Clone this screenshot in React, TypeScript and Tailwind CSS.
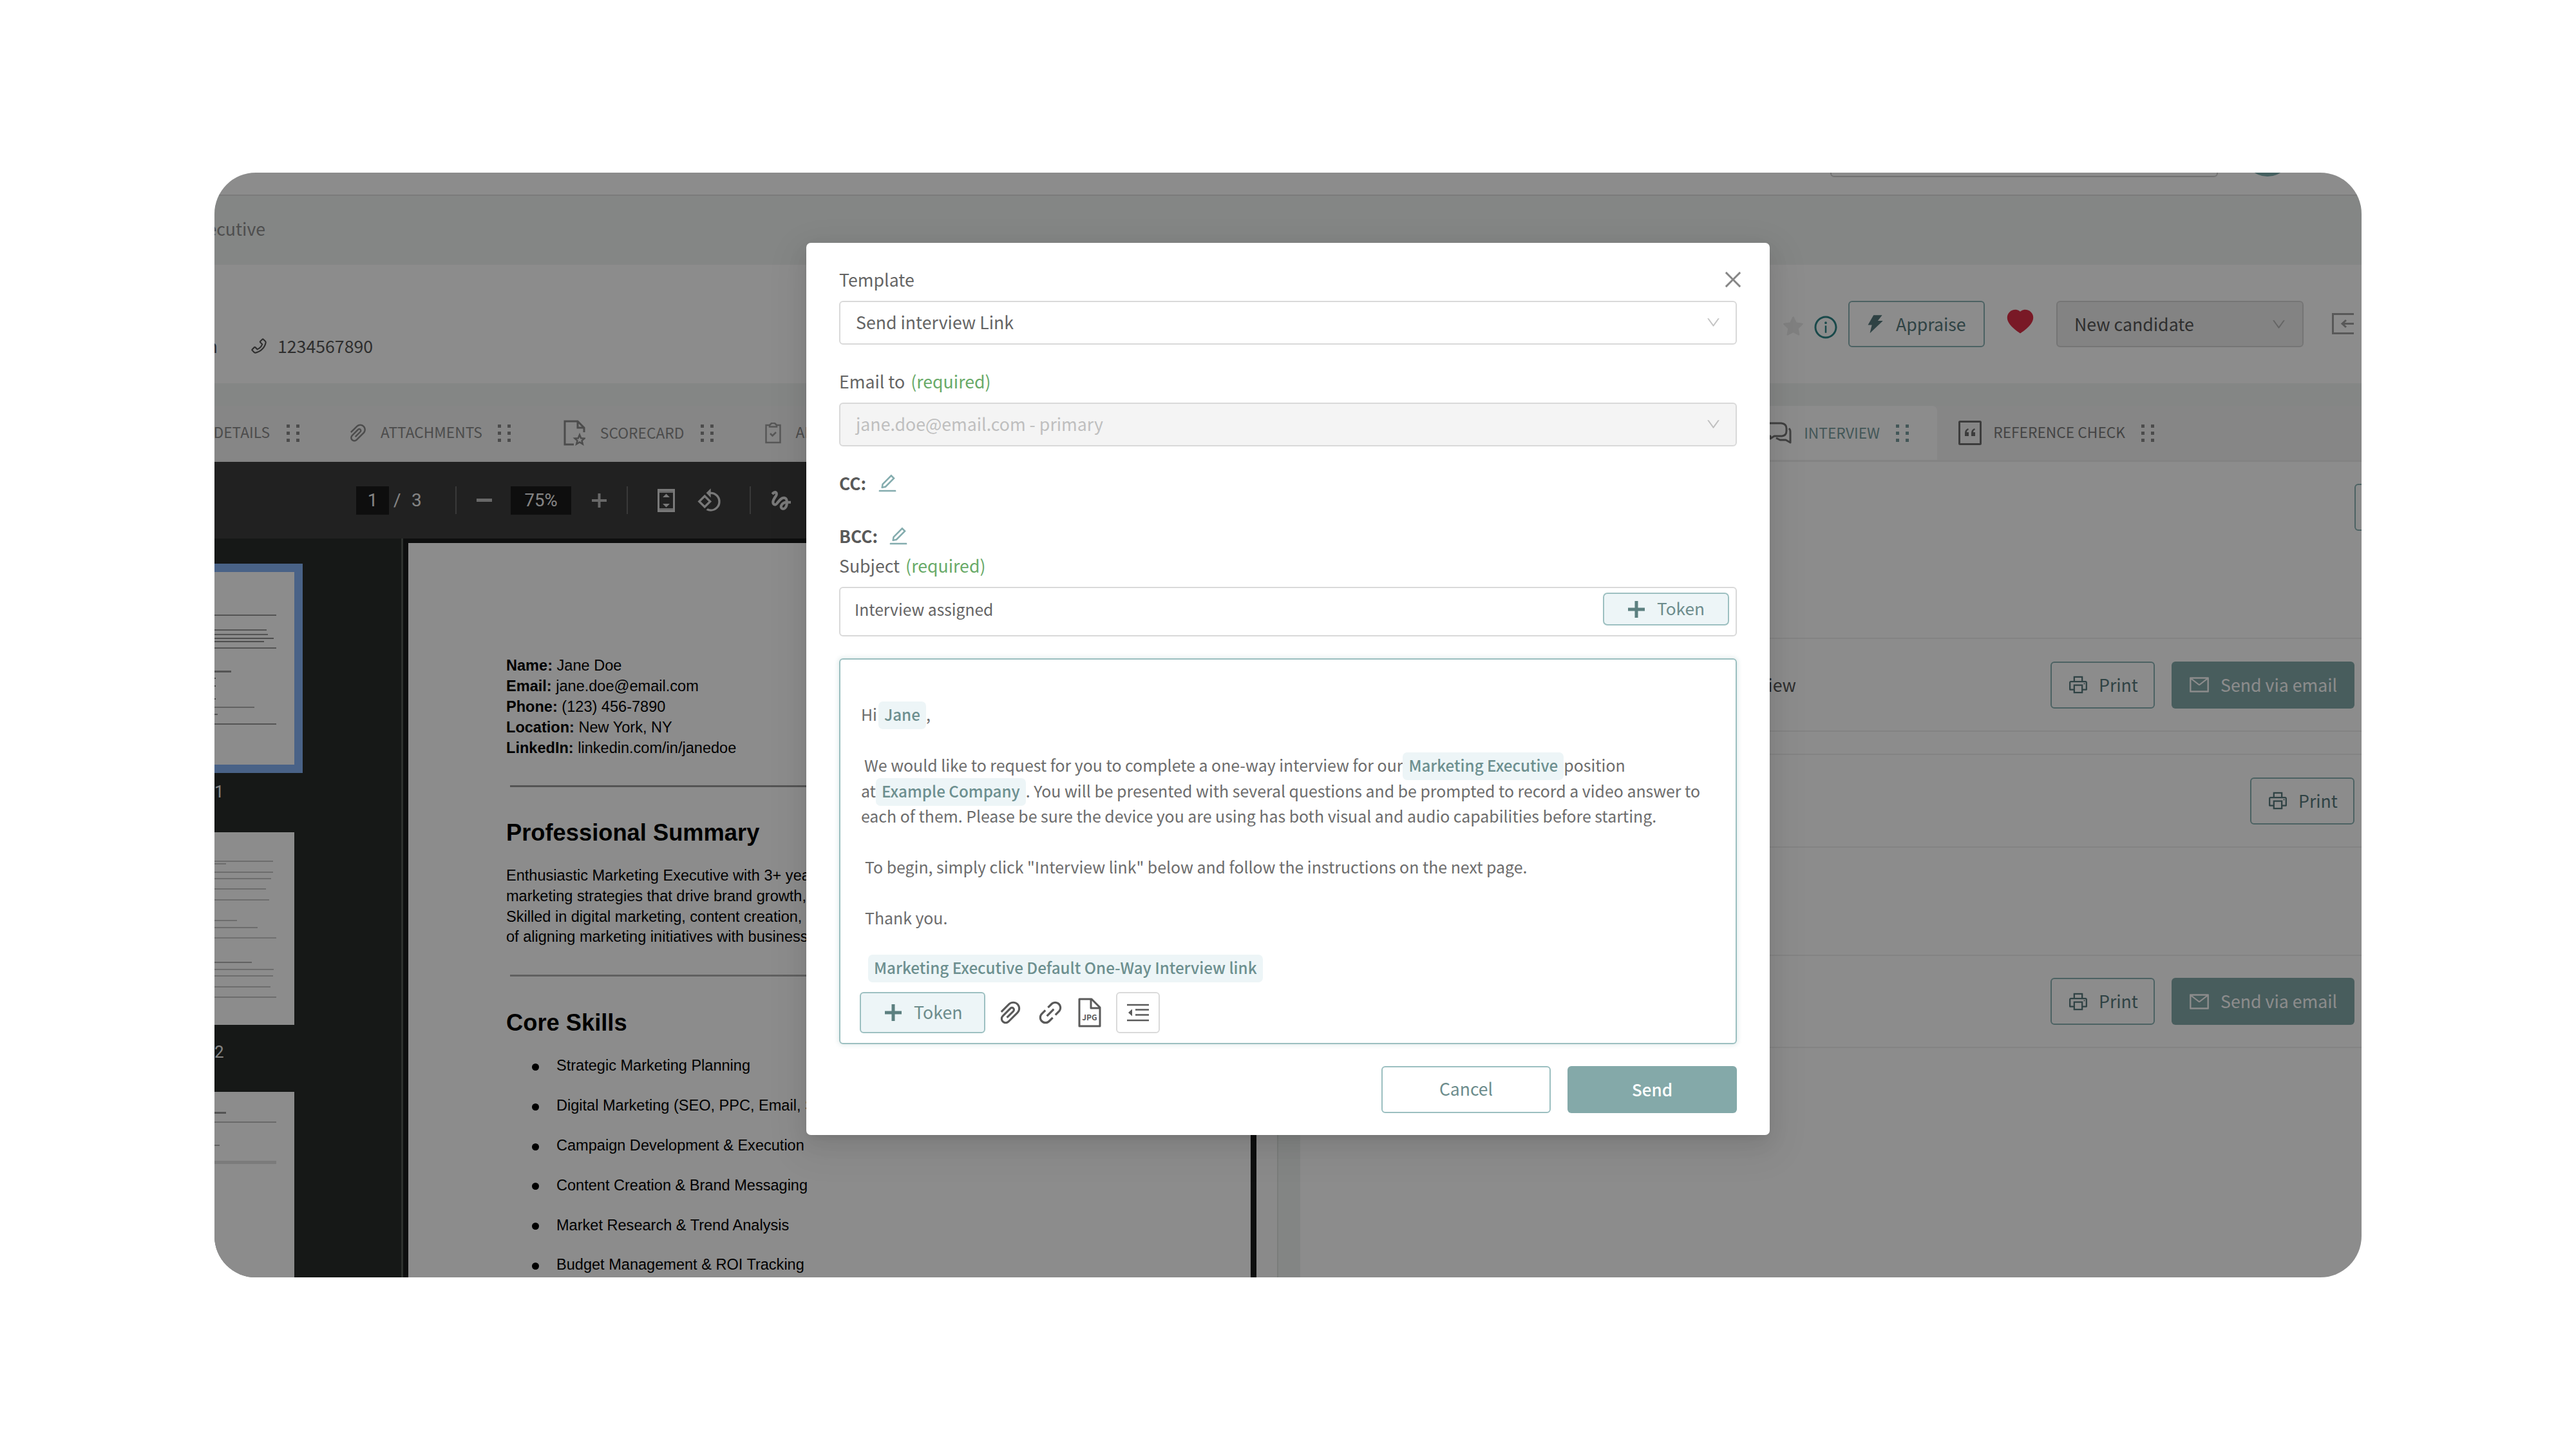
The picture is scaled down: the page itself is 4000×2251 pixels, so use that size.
import type { ReactNode } from "react";
import {
  AiFillHeart,
  AiFillStar,
  AiFillThunderbolt,
  AiOutlineClose,
  AiOutlineDown,
  AiOutlineEdit,
  AiOutlineInfoCircle,
  AiOutlineLink,
  AiOutlineMail,
  AiOutlinePaperClip,
  AiOutlinePhone,
  AiOutlinePrinter,
} from "react-icons/ai";
import { MdGesture, MdOutlineRotate90DegreesCcw } from "react-icons/md";

const skills = [
  "Strategic Marketing Planning",
  "Digital Marketing (SEO, PPC, Email, Social Media)",
  "Campaign Development & Execution",
  "Content Creation & Brand Messaging",
  "Market Research & Trend Analysis",
  "Budget Management & ROI Tracking",
];

const contact = [
  ["Name:", "Jane Doe"],
  ["Email:", "jane.doe@email.com"],
  ["Phone:", "(123) 456-7890"],
  ["Location:", "New York, NY"],
  ["LinkedIn:", "linkedin.com/in/janedoe"],
];

// [y, length, thickness, opacity]
type Stroke = [number, number, number, number];

const thumbOne: Stroke[] = [
  [66, 96, 2, 0.4],
  [89, 81, 2, 0.4],
  [96, 83, 2, 0.4],
  [102, 92, 2, 0.45],
  [107, 77, 2, 0.45],
  [117, 96, 2, 0.4],
  [153, 26, 3, 0.4],
  [164, 2, 2, 0.5],
  [176, 2, 2, 0.5],
  [196, 2, 2, 0.5],
  [209, 62, 2, 0.3],
  [220, 5, 2, 0.4],
  [235, 96, 2, 0.4],
];

const thumbTwo: Stroke[] = [
  [44, 91, 2, 0.22],
  [48, 18, 2, 0.22],
  [61, 91, 2, 0.22],
  [71, 88, 2, 0.22],
  [87, 80, 2, 0.22],
  [104, 85, 2, 0.22],
  [136, 35, 2, 0.22],
  [147, 67, 2, 0.22],
  [163, 96, 2, 0.2],
  [201, 58, 2, 0.3],
  [212, 92, 2, 0.22],
  [222, 91, 2, 0.22],
  [239, 87, 2, 0.22],
  [255, 96, 2, 0.22],
];

const thumbThree: Stroke[] = [
  [31, 18, 3, 0.4],
  [46, 96, 2, 0.25],
  [82, 8, 2, 0.3],
  [107, 96, 5, 0.12],
];

function PageThumb({ strokes }: { strokes: Stroke[] }) {
  return (
    <svg width="124" height="299" viewBox="0 0 124 299" className="block shrink-0 bg-white">
      {strokes.map(([y, length, thickness, opacity]) => (
        <rect key={y} x="0" y={y} width={length} height={thickness} fill="#000" opacity={opacity} />
      ))}
    </svg>
  );
}

function Dots({ className = "" }: { className?: string }) {
  return (
    <svg width="20" height="27" viewBox="0 0 20 27" className={className} fill="currentColor">
      <path d="M0 0h5v5H0zM15 0h5v5h-5zM0 11h5v5H0zM15 11h5v5h-5zM0 22h5v5H0zM15 22h5v5h-5z" />
    </svg>
  );
}

function Label({ children, required }: { children: ReactNode; required?: boolean }) {
  return (
    <>
      {children}
      {required && <span className="ml-[9px] text-[#68aa68]">(required)</span>}
    </>
  );
}

function Token({ children }: { children: ReactNode }) {
  return (
    <span className="rounded-[7px] bg-[#edf5f7] px-[9px] pt-[2px] pb-[6px] text-[24.200px] font-medium text-[#6c8f8f]">
      {children}
    </span>
  );
}

function Plus() {
  return (
    <svg width="26" height="26" viewBox="0 0 26 26" fill="#5c8080">
      <path d="M10.500 0h5v10.500H26v5H15.500V26h-5V15.500H0v-5h10.500z" />
    </svg>
  );
}

function PrintButton() {
  return (
    <button className="flex h-[73px] w-[162px] items-center rounded-[6px] border-2 border-[#8ab3b4] pl-[24px] text-[#56797c]">
      <AiOutlinePrinter size={34} />
      <span className="ml-[15px]">Print</span>
    </button>
  );
}

function SendEmailButton() {
  return (
    <button className="ml-[26px] flex h-[73px] w-[284px] items-center rounded-[6px] bg-[#84a9a9] pl-[26px] text-white">
      <AiOutlineMail size={34} />
      <span className="ml-[16px]">Send via email</span>
    </button>
  );
}

function TopBar() {
  return (
    <>
      <div className="flex h-9 shrink-0 items-start justify-end border-b-2 border-[#e0e0e0]">
        <div className="-mt-[33px] h-10 w-[602px] rounded-[6px] border-2 border-[#d0d0d0]"></div>
        <div className="-mt-[68px] mr-[109px] ml-[40px] size-[74px] rounded-full bg-[#7fb0b0]"></div>
      </div>

      <div className="flex h-[107px] shrink-0 items-center bg-[#f0f4f2] pb-[5px] text-[#8f8f8f]">
        <div className="flex w-[79px] justify-end whitespace-nowrap">Executive</div>
      </div>

      <div className="flex h-[184px] shrink-0 items-center pr-[12px]">
        <div className="mt-[68px] flex items-center text-[#555]">
          <div className="flex w-[5px] justify-end">m</div>
          <AiOutlinePhone size={30} className="ml-[49px]" />
          <span className="ml-[14px]">1234567890</span>
        </div>
        <div className="ml-auto flex items-center">
          <AiFillStar size={37} className="mt-[8px] text-[#e9e9e9]" />
          <AiOutlineInfoCircle size={40} className="mt-[9px] ml-[12px] text-[#2f8587]" />
          <button className="ml-[15px] flex h-[72px] w-[212px] items-center rounded-[6px] border-2 border-[#8ab3b4] pl-[23px] text-[#56797c]">
            <AiFillThunderbolt size={34} />
            <span className="ml-[15px]">Appraise</span>
          </button>
          <AiFillHeart size={48} className="-mt-[8px] ml-[31px] text-[#dc2f45]" />
          <div className="ml-[32px] flex h-[72px] w-[384px] items-center justify-between rounded-[6px] border-2 border-[#d6d6d6] bg-[#efefef] pr-[24px] pl-[26px] text-[#555]">
            New candidate
            <AiOutlineDown size={25} className="text-[#b8b8b8]" />
          </div>
          <svg width="34" height="34" viewBox="0 0 34 34" fill="none" stroke="#a0a0a0" strokeWidth="3" className="ml-[44px]">
            <path d="M34 1.500H1.500v30H34" />
            <path d="M34 16.500H16M22 11l-6 5.500 6 5.500" />
          </svg>
        </div>
      </div>
    </>
  );
}

function Tabs() {
  return (
    <>
      <div className="h-[35px] shrink-0 bg-[#f0f4f2]"></div>
      <div className="flex h-[87px] shrink-0 items-center border-b-3 border-[#eeeeee] bg-[#f4f4f4] text-[22.750px] text-[#8a8a8a]">
        <div className="flex w-[86px] justify-end pb-[2px]">DETAILS</div>
        <Dots className="ml-[26px]" />
        <AiOutlinePaperClip size={36} className="ml-[73px]" />
        <span className="ml-[17px] pb-[2px]">ATTACHMENTS</span>
        <Dots className="ml-[24px]" />
        <svg width="34" height="40" viewBox="0 0 34 40" fill="none" stroke="currentColor" strokeWidth="3" className="ml-[82px]">
          <path d="M16 38H2V2h20l10 10v7M22 2v10h10" />
          <path d="M25 23l2.200 5.200 5.300.4-4 3.500 1.300 5.300-4.800-2.900-4.800 2.900 1.300-5.300-4-3.500 5.300-.4z" strokeWidth="2.500" />
        </svg>
        <span className="ml-[23px]">SCORECARD</span>
        <Dots className="ml-[26px]" />
        <svg width="25" height="33" viewBox="0 0 25 33" fill="none" stroke="#9e9e9e" strokeWidth="2.500" className="ml-[80px]">
          <path d="M7 4H1.500v27h22V4H18" />
          <path d="M7 6.500V4l3-3h5l3 3v2.500zM8 17l3.500 3.500 5.500-5.500" />
        </svg>
        <span className="ml-[22px] pb-[2px]">APPRAISALS</span>

        <div className="ml-auto flex h-full w-[308px] items-center rounded-tr-[8px] bg-white pl-[46px] text-[#7a9ea0]">
          <svg width="36" height="36" viewBox="0 0 36 36" fill="none" stroke="#767676" strokeWidth="3" strokeLinejoin="round">
            <path d="M2 3h18q8 1 8 8v4q0 7-7 8H9l-6 4v-4H1" />
            <path d="M32 11q2 2 2 5v17l-7-4H18l-6-3" />
          </svg>
          <span className="ml-[19px]">INTERVIEW</span>
          <Dots className="ml-[25px]" />
        </div>
        <svg width="36" height="38" viewBox="0 0 36 38" fill="none" stroke="#6e6e6e" strokeWidth="3" className="ml-[33px]">
          <rect x="1.500" y="1.500" width="33" height="35" rx="1" />
          <path
            d="M15 12q-5 2-5 7v5h6v-6h-3q0-3 3-4zM25 12q-5 2-5 7v5h6v-6h-3q0-3 3-4z"
            fill="#6e6e6e"
            stroke="none"
          />
        </svg>
        <span className="ml-[18px] pb-[2px] text-[#7c7c7c]">REFERENCE CHECK</span>
        <Dots className="mr-[322px] ml-[25px]" />
      </div>
    </>
  );
}

function PdfViewer() {
  return (
    <div className="flex w-[1650px] shrink-0 flex-col">
      <div className="flex h-[119px] shrink-0 items-center bg-[#3c3c3c] pl-[220px] font-['Roboto',sans-serif] text-[28px] text-[#f1f1f1]">
        <div className="flex h-[44px] w-[51px] items-center justify-center bg-[#1b1b1b]">1</div>
        <span className="ml-[7px] w-[11px]">/</span>
        <span className="ml-[17px] w-[21px]">3</span>
        <div className="ml-[47px] h-[43px] w-[2px] bg-[#686868]"></div>
        <div className="ml-[31px] h-[5px] w-[24px] bg-[#bdbdbd]"></div>
        <div className="ml-[29px] flex h-[44px] w-[94px] items-center justify-center bg-[#1b1b1b] text-[27.500px]">75%</div>
        <svg width="23" height="22" viewBox="0 0 23 22" fill="#bdbdbd" className="ml-[32px]">
          <path d="M9.500 0h4v9H23v4h-9.500v9h-4v-9H0V9h9.500z" />
        </svg>
        <div className="ml-[31px] h-[43px] w-[2px] bg-[#686868]"></div>
        <svg width="27" height="36" viewBox="0 0 27 36" fill="none" className="ml-[46px]">
          <rect x="1.500" y="1.500" width="24" height="33" stroke="#dcdcdc" strokeWidth="3" />
          <path d="M3 4.500h21M3 31.500h21" stroke="#c2c2c2" strokeWidth="3" />
          <path d="M8 13h11l-5.500-5.500zM8 23h11l-5.500 5.500z" fill="#dcdcdc" />
        </svg>
        <MdOutlineRotate90DegreesCcw size={40} className="ml-[34px] text-[#dcdcdc]" />
        <div className="ml-[42px] h-[43px] w-[2px] bg-[#686868]"></div>
        <MdGesture size={40} className="ml-[27px] text-[#dcdcdc]" />
      </div>

      <div className="flex min-h-0 grow">
        <div className="flex w-[290px] shrink-0 flex-col overflow-hidden bg-[#282c2a] pt-[39px] font-['Roboto',sans-serif] text-[26px] text-[#f1f1f1]">
          <div className="h-[325px] w-[137px] shrink-0 bg-[#86b3f6] pt-[13px]">
            <PageThumb strokes={thumbOne} />
          </div>
          <div className="flex h-[92px] shrink-0 items-center pb-[34px]">1</div>
          <PageThumb strokes={thumbTwo} />
          <div className="flex h-[104px] shrink-0 items-center pb-[20px]">2</div>
          <PageThumb strokes={thumbThree} />
        </div>
        <div className="w-[3px] shrink-0 bg-[#555955]"></div>
        <div className="flex grow bg-[#1b1d1c] pt-[7px] pl-[8px]">
          <div className="w-[1308px] shrink-0 bg-white px-[152px] pt-[175px] font-['Liberation_Sans',sans-serif] text-[23.550px] whitespace-nowrap text-black">
            {contact.map(([name, value]) => (
              <div key={name} className="h-[31.900px] leading-[31.900px]">
                <b>{name}</b> {value}
              </div>
            ))}
            <div className="mt-[42px] ml-[6px] h-[3px] bg-[#9a9a9a]"></div>
            <h2 className="mt-[50px] text-[36.300px] leading-[42px] font-bold">Professional Summary</h2>
            <div className="mt-[30px] leading-[31.600px]">
              <p>Enthusiastic Marketing Executive with 3+ years</p>
              <p>marketing strategies that drive brand growth,</p>
              <p>Skilled in digital marketing, content creation,</p>
              <p>of aligning marketing initiatives with business</p>
            </div>
            <div className="mt-[42px] ml-[6px] h-[3px] bg-[#b0b0b0]"></div>
            <h2 className="mt-[51px] text-[36.300px] leading-[42px] font-bold">Core Skills</h2>
            <ul className="mt-[15px]">
              {skills.map((skill) => (
                <li key={skill} className="flex h-[61.900px] items-center">
                  <span className="mt-[3px] mr-[27px] ml-[40px] size-[11px] rounded-full bg-black"></span>
                  {skill}
                </li>
              ))}
            </ul>
          </div>
          <div className="-mt-[7px] ml-[9px] grow bg-[#fbfbfb]"></div>
        </div>
      </div>
    </div>
  );
}

function InterviewPanel() {
  return (
    <div className="min-w-0 grow bg-white text-[#555]">
      <div className="flex h-[273px] justify-end pt-[34px]">
        <div className="-mr-[89px] h-[73px] w-[100px] rounded-[6px] border-2 border-[#8ab3b4]"></div>
      </div>
      <div className="flex h-[146px] items-center justify-end border-y-2 border-[#efefef] pr-[11px]">
        <div className="mr-auto flex w-[770px] justify-end">One-Way Interview</div>
        <PrintButton />
        <SendEmailButton />
      </div>
      <div className="mt-[34px] flex h-[146px] items-center justify-end border-y-2 border-[#efefef] pr-[11px]">
        <PrintButton />
      </div>
      <div className="mt-[166px] flex h-[145px] items-center justify-end border-y-2 border-[#efefef] pr-[11px]">
        <PrintButton />
        <SendEmailButton />
      </div>
    </div>
  );
}

function EmailModal() {
  return (
    <div className="flex h-[1385px] w-[1496px] flex-col rounded-[7px] bg-white px-[51px] text-[26.700px] text-[#646464] shadow-[0_12px_32px_rgba(0,0,0,0.08),0_6px_12px_-8px_rgba(0,0,0,0.12),0_18px_56px_16px_rgba(0,0,0,0.05)]">
      <div className="flex h-[90px] items-center justify-between pt-[24px]">
        <Label>Template</Label>
        <AiOutlineClose size={36} className="-mr-[12px] text-[#868686]" />
      </div>
      <div className="flex h-[68px] items-center justify-between rounded-[6px] border-2 border-[#d9d9d9] pr-[22px] pb-[2px] pl-[24px]">
        Send interview Link
        <AiOutlineDown size={25} className="text-[#c4c4c4]" />
      </div>

      <div className="flex h-[90px] items-center pt-[25px]">
        <Label required>Email to</Label>
      </div>
      <div className="flex h-[68px] items-center justify-between rounded-[6px] border-2 border-[#d9d9d9] bg-[#f4f4f4] pr-[22px] pb-[1px] pl-[24px] text-[#bfbfbf]">
        jane.doe@email.com - primary
        <AiOutlineDown size={25} />
      </div>

      <div className="mt-[16px] flex h-[82px] items-center text-[26.300px] font-bold text-[#595959]">
        CC:
        <AiOutlineEdit size={34} className="ml-[16px] text-[#84acae]" />
      </div>
      <div className="flex h-[68px] items-center pt-[14px] text-[26.300px] font-bold text-[#595959]">
        BCC:
        <AiOutlineEdit size={34} className="ml-[15px] text-[#84acae]" />
      </div>

      <div className="flex h-[52px] items-center pb-[13px]">
        <Label required>Subject</Label>
      </div>
      <div className="flex h-[77px] items-center justify-between rounded-[6px] border-2 border-[#d9d9d9] pr-[10px] pb-[8px] pl-[22px] text-[24.650px]">
        Interview assigned
        <button className="flex h-[51px] w-[196px] items-center rounded-[7px] border-2 border-[#9dc0c1] bg-[#edf5f7] pl-[37px] text-[26.200px] text-[#6c8c8c]">
          <Plus />
          <span className="ml-[19px] pb-[2px]">Token</span>
        </button>
      </div>

      <div className="mt-[34px] h-[599px] rounded-[6px] border-2 border-[#9bbfc0] px-[32px] pt-[65px] text-[24.860px] leading-[39.500px] whitespace-nowrap text-[#6c6c6c] shadow-[0_0_6px_2px_rgba(132,169,169,0.2)]">
        <p>
          Hi
          <span className="ml-[2px]">
            <Token>Jane</Token>,
          </span>
        </p>
        <br />
        <p className="ml-[5px]">
          We would like to request for you to complete a one-way interview for our
          <Token>Marketing Executive</Token>
          position
        </p>
        <p>
          at
          <Token>Example Company</Token>. You will be presented with several questions and be prompted to record a video answer to
        </p>
        <p>each of them. Please be sure the device you are using has both visual and audio capabilities before starting.</p>
        <br />
        <p className="ml-[6px]">To begin, simply click "Interview link" below and follow the instructions on the next page.</p>
        <br />
        <p className="ml-[6px]">Thank you.</p>
        <br />
        <p className="-mt-[2px] ml-[11px]">
          <Token>Marketing Executive Default One-Way Interview link</Token>
        </p>

        <div className="mt-[18px] -ml-[2px] flex items-center text-[#5a5a5a]">
          <button className="flex h-[64px] w-[195px] items-center rounded-[6px] border-2 border-[#9dc0c1] bg-[#edf5f7] pl-[37px] text-[26.700px] text-[#6c8c8c]">
            <Plus />
            <span className="ml-[19px] pb-[2px]">Token</span>
          </button>
          <AiOutlinePaperClip size={46} className="ml-[16px]" />
          <AiOutlineLink size={46} className="ml-[16px]" />
          <svg width="36" height="46" viewBox="0 0 36 46" fill="none" stroke="currentColor" strokeWidth="3" strokeLinejoin="round" className="ml-[20px]">
            <path d="M2 2h19l13 13v29H2zM20 2v14h13" />
            <text x="18" y="35" textAnchor="middle" fontSize="12" fontWeight="bold" fill="currentColor" stroke="none">
              JPG
            </text>
          </svg>
          <div className="ml-[23px] flex h-[64px] w-[68px] items-center justify-center rounded-[6px] border-2 border-[#dadada]">
            <svg width="34" height="30" viewBox="0 0 34 30" stroke="currentColor" strokeWidth="2.500">
              <path d="M0 3h34M13 10.500h21M13 18.500h21M0 27h34" />
              <path d="M2 15l6-5.500v11z" fill="currentColor" stroke="none" />
            </svg>
          </div>
        </div>
      </div>

      <div className="mt-[34px] flex justify-end">
        <button className="h-[73px] w-[263px] rounded-[6px] border-2 border-[#9bbfc0] pb-[2px] text-[26.500px] text-[#6c8c8c]">Cancel</button>
        <button className="ml-[26px] h-[73px] w-[263px] rounded-[6px] bg-[#84a9a9] pb-[2px] text-[26px] font-medium text-white">Send</button>
      </div>
    </div>
  );
}

function App() {
  return (
    <div className="flex h-[2251px] w-[4000px] items-center justify-center bg-white font-['Noto_Sans_CJK_SC',sans-serif] text-[26.700px] leading-none">
      <div className="relative flex h-[1715px] w-[3334px] flex-col overflow-hidden rounded-[64px] bg-white">
        <TopBar />
        <Tabs />
        <div className="flex min-h-0 grow">
          <PdfViewer />
          <div className="w-[36px] shrink-0 border-l-2 border-[#dfe3e1] bg-[#eff2f1]"></div>
          <InterviewPanel />
        </div>

        <div className="absolute inset-0 flex items-start justify-center bg-black/45 pt-[109px]">
          <EmailModal />
        </div>
      </div>
    </div>
  );
}

export default App;
